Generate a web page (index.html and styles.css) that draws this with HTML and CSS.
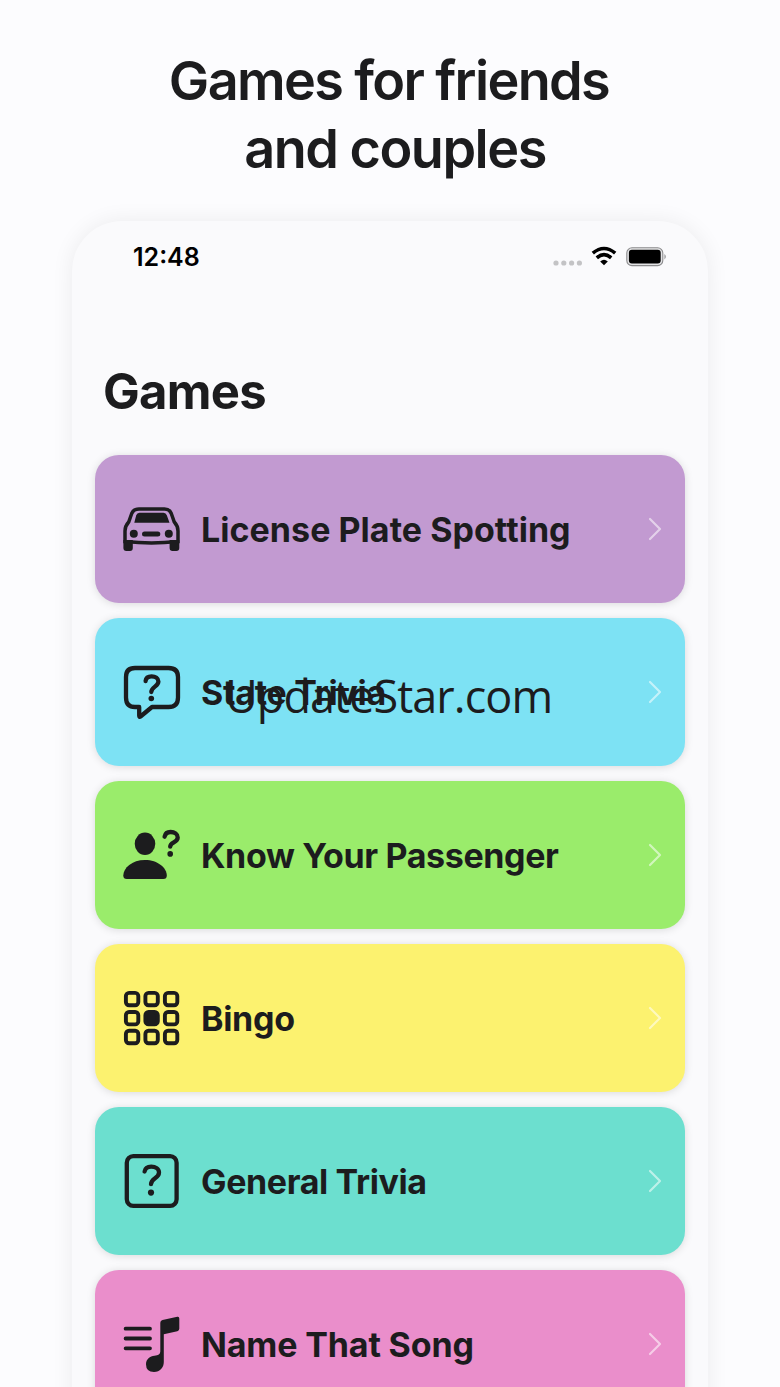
FILE: index.html
```html
<!DOCTYPE html>
<html lang="en">
<head>
<meta charset="utf-8">
<title>Games for friends and couples</title>
<link rel="stylesheet" href="styles.css">
</head>
<body>
<h1 class="headline"><span class="line-one">Games for friends</span><span class="line-two">and couples</span></h1>
<main class="phone">
  <header class="status">
    <span class="time">12:48</span>
    <svg class="status-icons" width="116" height="24" viewBox="0 0 116 24">
      <g fill="#c3c3c5"><circle cx="4" cy="18" r="2.6"/><circle cx="11.8" cy="18" r="2.6"/><circle cx="19.6" cy="18" r="2.6"/><circle cx="27.4" cy="18" r="2.6"/></g>
      <g fill="none" stroke="#000" stroke-width="3.6"><path d="M40.8 8.2Q52 -1.2 63.2 8.2"/><path d="M44.8 12.8Q52 6.6 59.2 12.8"/></g>
      <path d="M48.2 16.4Q52 13.2 55.8 16.4L52 20.2Z"/>
      <rect x="74.8" y="2.8" width="36" height="17.8" rx="5.2" fill="#e4e4e6" stroke="#8b8b8d" stroke-width="1.1"/>
      <rect x="76.9" y="4.8" width="31.8" height="13.8" rx="3"/>
      <path d="M112.5 9Q115 11.6 112.5 14.4Z" fill="#858587"/>
    </svg>
  </header>
  <h2 class="title">Games</h2>
  <div class="list">
    <section class="card purple">
      <svg class="icon" viewBox="0 0 60 60">
        <path d="M17 10H42.5Q47.5 10 49.3 14.5L52.3 23Q56 27 56 32V42.6Q42 44 29.5 44Q17 44 3 42.6V32Q3 27 6.7 23L9.7 14.5Q11.5 10 17 10Z" fill="none" stroke="#1c1c1e" stroke-width="3.5"/>
        <path d="M17.5 13.8H41.5Q44 13.8 44.8 16.3L47.5 23.8H12.3L14.2 16.3Q15 13.8 17.5 13.8Z"/>
        <circle cx="11.8" cy="34.8" r="4"/><circle cx="46.8" cy="34.8" r="4"/>
        <rect x="20" y="32.4" width="18.3" height="5" rx="2.5"/>
        <path d="M1.4 41H10.8V49Q10.8 52 8 52H4.4Q1.4 52 1.4 49ZM47.6 41H57.3V49Q57.3 52 54.3 52H50.6Q47.6 52 47.6 49Z"/>
      </svg>
      <span class="label license">License Plate Spotting</span>
      <svg class="chevron" viewBox="0 0 14 24"><path d="M2 2L12 12L2 22"/></svg>
    </section>
    <section class="card cyan">
      <svg class="icon" viewBox="0 0 60 60">
        <path d="M13 6H46.5Q56 6 56 15V35.5Q56 45 46.5 45H30L18.5 54.5Q17.2 55.5 17.2 53.5V45H13Q4 45 4 35.5V15Q4 6 13 6Z" class="outline"/>
        <path d="M23.6 19C24 15.8 26.5 14.4 29.6 14.4C33.4 14.4 36.4 16.3 36.4 19.6C36.4 24.7 29.3 24.6 29.3 30" class="outline mark"/>
        <circle cx="29.3" cy="36.5" r="2.8"/>
      </svg>
      <span class="label">State Trivia</span>
      <svg class="chevron" viewBox="0 0 14 24"><path d="M2 2L12 12L2 22"/></svg>
      <span class="watermark">UpdateStar.com</span>
    </section>
    <section class="card green">
      <svg class="icon" viewBox="0 0 60 60">
        <ellipse cx="23" cy="18.8" rx="10.3" ry="11.2"/>
        <path d="M4.8 54Q1.3 54 1.3 50.5C1.3 43 10 35 23 35S44.8 43 44.8 50.5Q44.8 54 41.3 54Z"/>
        <path d="M42.6 11.7C43.2 8.5 45.5 7 48.6 7C52.5 7 55.7 9 55.7 12.4C55.7 17.8 48.2 16.8 48.2 21.7" class="outline mark"/>
        <circle cx="48.2" cy="28.9" r="2.8"/>
      </svg>
      <span class="label passenger">Know Your Passenger</span>
      <svg class="chevron" viewBox="0 0 14 24"><path d="M2 2L12 12L2 22"/></svg>
    </section>
    <section class="card yellow">
      <svg class="icon" viewBox="0 0 60 60">
        <g fill="none" stroke="#1c1c1e" stroke-width="3.9">
          <rect x="3.9" y="4.9" width="12.4" height="12.4" rx="3.2"/><rect x="23.4" y="4.9" width="12.4" height="12.4" rx="3.2"/><rect x="42.9" y="4.9" width="12.4" height="12.4" rx="3.2"/>
          <rect x="3.9" y="24" width="12.4" height="12.4" rx="3.2"/><rect x="23.4" y="24" width="12.4" height="12.4" rx="3.2" fill="#1c1c1e"/><rect x="42.9" y="24" width="12.4" height="12.4" rx="3.2"/>
          <rect x="3.9" y="42.8" width="12.4" height="12.4" rx="3.2"/><rect x="23.4" y="42.8" width="12.4" height="12.4" rx="3.2"/><rect x="42.9" y="42.8" width="12.4" height="12.4" rx="3.2"/>
        </g>
      </svg>
      <span class="label">Bingo</span>
      <svg class="chevron" viewBox="0 0 14 24"><path d="M2 2L12 12L2 22"/></svg>
    </section>
    <section class="card teal">
      <svg class="icon" viewBox="0 0 60 60">
        <rect x="4.8" y="5.2" width="49.8" height="49.6" rx="6.5" class="outline"/>
        <path d="M22.6 20.5C23.2 17 25.8 15.6 29.2 15.6C33.5 15.6 37 17.8 37 21.5C37 27.5 29 27 29 33.2" class="outline mark"/>
        <circle cx="29" cy="41.6" r="3.1"/>
      </svg>
      <span class="label trivia">General Trivia</span>
      <svg class="chevron" viewBox="0 0 14 24"><path d="M2 2L12 12L2 22"/></svg>
    </section>
    <section class="card pink">
      <svg class="icon" viewBox="0 0 60 60">
        <path d="M3.6 14.7H28M3.6 24.5H28M3.6 34.3H28" class="outline lines"/>
        <path d="M38.3 8.7Q38.3 6.7 40.5 6L55.3 2.8Q57.3 2.4 57.3 4.5V14.8Q57.3 16.7 55.3 17.2L41.8 20.2V48C41.8 53.5 38 58 32 58Q24 58 24 50.3C24 45 28 42 32.5 41.7Q38.3 41.2 38.3 37.5Z"/>
      </svg>
      <span class="label song">Name That Song</span>
      <svg class="chevron" viewBox="0 0 14 24"><path d="M2 2L12 12L2 22"/></svg>
    </section>
  </div>
</main>
</body>
</html>
```
FILE: styles.css
```css
* { box-sizing: border-box; }
body {
  margin: 0;
  padding-top: 47px;
  height: 1387px;
  overflow: hidden;
  background: #fcfcfe;
  color: #1c1c1e;
  font-family: Inter, "Liberation Sans", sans-serif;
}
.headline {
  margin: 0;
  height: 174px;
  text-align: center;
  font-size: 54px;
  line-height: 68px;
  font-weight: 600;
  letter-spacing: -1.65px;
}
.line-one, .line-two { display: block; }
.line-one { padding-right: 2px; }
.line-two { padding-left: 10px; letter-spacing: -1.5px; }
.phone {
  width: 636px;
  height: 1190px;
  margin: 0 auto;
  padding: 0 23px;
  overflow: hidden;
  border-radius: 50px 50px 0 0;
  background: #fafafc;
  box-shadow: 0 0 22px rgba(0, 0, 0, 0.07);
}
.status {
  display: flex;
  justify-content: space-between;
  height: 48px;
  padding: 24px 17px 0 38px;
  color: #000;
}
.time { font-size: 25px; line-height: 24px; font-weight: 600; }
.status-icons { display: block; }
.title {
  margin: 94px 0 0 8px;
  height: 92px;
  font-size: 49px;
  line-height: 58px;
  font-weight: 700;
  letter-spacing: -0.7px;
}
.list { display: grid; gap: 15px; }
.card {
  position: relative;
  display: flex;
  align-items: center;
  height: 148px;
  padding: 0 23px 0 27px;
  border-radius: 24px;
  box-shadow: 0 1px 9px rgba(0, 0, 0, 0.13);
}
.icon { width: 60px; height: 60px; fill: #1c1c1e; }
.outline { fill: none; stroke: #1c1c1e; stroke-width: 4.3; stroke-linecap: round; stroke-linejoin: round; }
.mark { stroke-width: 4.3; }
.lines { stroke-width: 3.8; }
.label {
  flex: 1;
  margin-left: 19px;
  font-size: 34px;
  font-weight: 700;
  letter-spacing: -0.3px;
  white-space: nowrap;
}
.label.license { letter-spacing: 0.04px; }
.label.passenger { letter-spacing: -0.36px; }
.label.trivia { letter-spacing: -0.38px; }
.label.song { letter-spacing: -0.15px; }
.chevron { width: 14px; height: 24px; fill: none; stroke: rgba(255, 255, 255, 0.55); stroke-width: 2.2; stroke-linecap: round; stroke-linejoin: round; }
.watermark {
  position: absolute;
  left: 130px;
  top: 48px;
  font: 400 45px/60px "Open Sans", "Noto Sans", sans-serif;
  letter-spacing: -0.95px;
  white-space: nowrap;
}
.purple { background: #c29ad1; }
.cyan { background: #7de2f4; }
.green { background: #9aec6b; }
.yellow { background: #fcf26f; }
.teal { background: #6cdfcf; }
.pink { background: #ea8ecb; }
```
